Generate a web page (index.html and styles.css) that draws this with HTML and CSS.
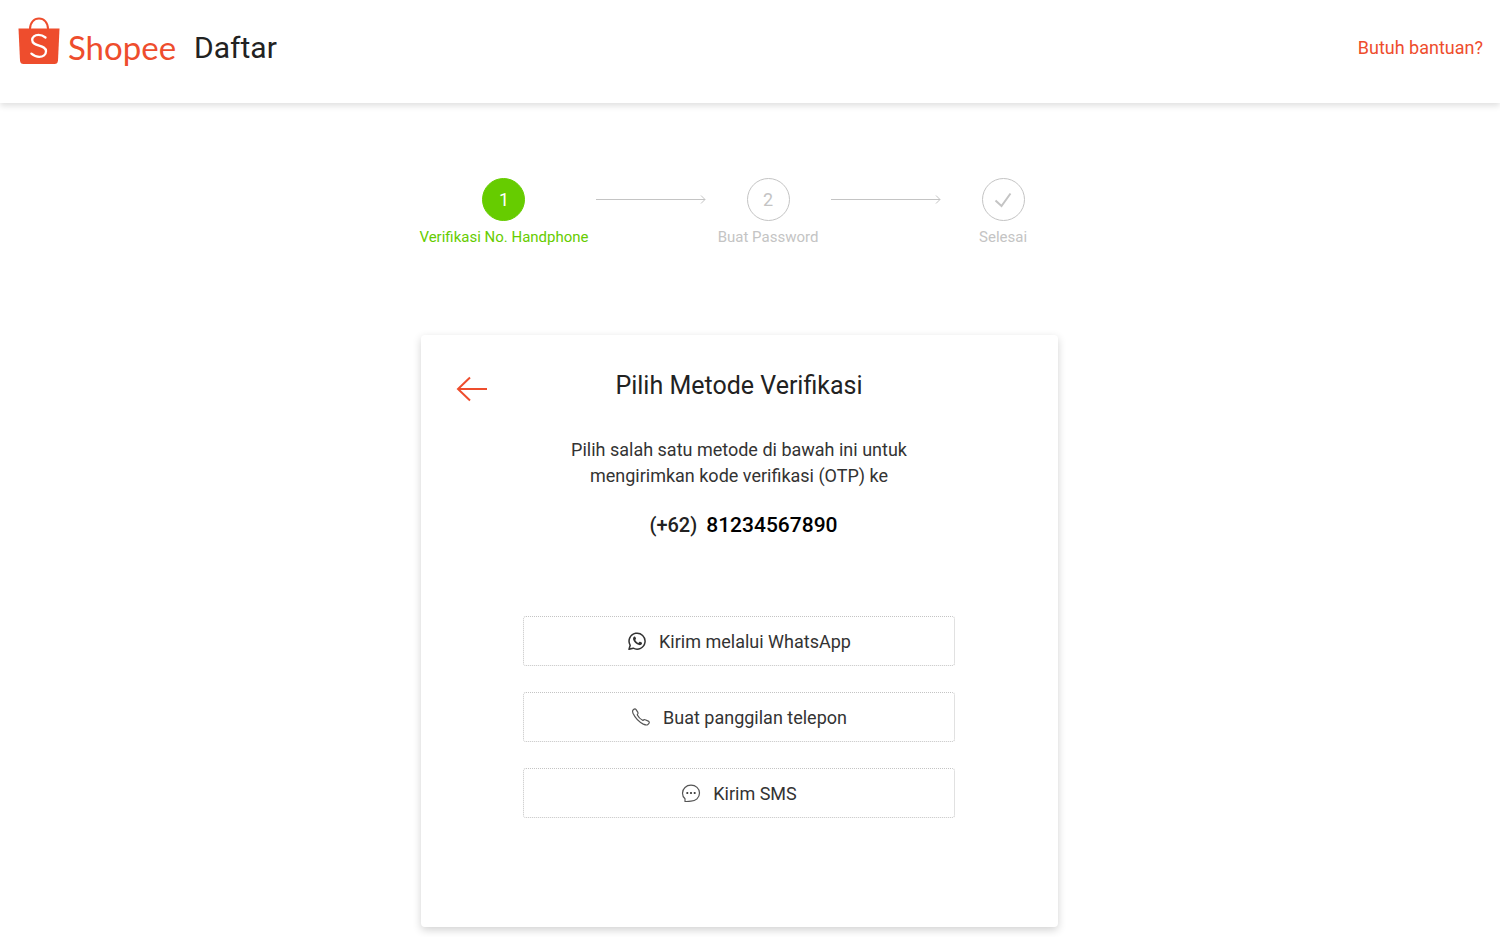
FILE: index.html
```html
<!doctype html>
<html lang="id">
<head>
  <meta charset="UTF-8" />
  <meta name="viewport" content="width=device-width, initial-scale=1" />
  <title>Daftar | Shopee</title>
  <link rel="stylesheet" href="styles.css">
</head>
<body>
  <header class="header">
    <a class="logo" href="#">
      <svg class="logo-bag" viewBox="0 0 42 48" width="42" height="48" aria-hidden="true">
        <path d="M12 12C12 5.500 16 1.500 21 1.500S30 5.500 30 12" fill="none" stroke="#ee4d2d" stroke-width="2" />
        <path d="M0.500 11.500h41l-1.500 32q-.3 3.500-3.500 3.500H5.500Q2.300 47 2 43.500z" fill="#ee4d2d" />
        <path d="M27.500 20.500C25 18.500 22.800 17.800 20.500 17.800c-3.800 0-6.300 2.200-6.300 5.200 0 7 13.800 4.300 13.800 11.200 0 3.500-3 5.600-6.800 5.600-3 0-5.500-1.200-7.800-3.200" fill="none" stroke="#fff" stroke-width="2.300" stroke-linecap="round" />
      </svg>
      <span class="logo-name">Shopee</span>
    </a>
    <h1 class="page-title">Daftar</h1>
    <a class="help" href="#">Butuh bantuan?</a>
  </header>

  <main class="main">
    <ol class="steps">
      <li class="step active">
        <span class="step-circle">1</span>
        <span class="step-label">Verifikasi No. Handphone</span>
      </li>
      <li class="step-arrow" aria-hidden="true">
        <svg viewBox="0 0 110 11" width="110" height="11"><path d="M0 5.500H109M105 1.500L109 5.500L105 9.500" /></svg>
      </li>
      <li class="step">
        <span class="step-circle">2</span>
        <span class="step-label">Buat Password</span>
      </li>
      <li class="step-arrow" aria-hidden="true">
        <svg viewBox="0 0 110 11" width="110" height="11"><path d="M0 5.500H109M105 1.500L109 5.500L105 9.500" /></svg>
      </li>
      <li class="step">
        <span class="step-circle">
          <svg viewBox="0 0 18 16" width="18" height="16"><path d="M1.500 8.500L7.500 14L16.500 1.500" fill="none" stroke="#c4c4c4" stroke-width="2" /></svg>
        </span>
        <span class="step-label">Selesai</span>
      </li>
    </ol>

    <section class="card">
      <div class="card-head">
        <button class="back" type="button" aria-label="Kembali">
          <svg viewBox="0 0 32 26" width="32" height="26"><path d="M31 13H2M14 1.500L2 13L14 24.500" fill="none" stroke="#ee4d2d" stroke-width="2" /></svg>
        </button>
        <h2 class="card-title">Pilih Metode Verifikasi</h2>
      </div>
      <p class="card-text">Pilih salah satu metode di bawah ini untuk<br>mengirimkan kode verifikasi (OTP) ke</p>
      <p class="phone"><span class="phone-code">(+62)</span><span class="phone-number">81234567890</span></p>

      <div class="methods">
        <button class="method" type="button">
          <svg viewBox="0 0 20 20" width="20" height="20" aria-hidden="true">
            <path d="M2 18.300L3.200 14.300A8 8 0 1 1 6.200 17.200Z" fill="none" stroke="#333" stroke-width="1.500" stroke-linejoin="round" />
            <path d="M7.300 5.600c.5-.2.900 0 1.100.5l.6 1.500c.1.300 0 .6-.7 1.300.7 1.500 1.700 2.400 3.100 3.100l.9-1c.2-.3.500-.3.800-.2l1.600.8c.4.200.4.500.3.900-.3 1.200-1.600 1.900-2.900 1.600-3-.7-5-2.700-5.900-5.300-.4-1.300.1-2.700 1.100-3.200z" fill="#333" />
          </svg>
          <span>Kirim melalui WhatsApp</span>
        </button>
        <button class="method" type="button">
          <svg viewBox="0 0 20 20" width="20" height="20" aria-hidden="true">
            <path d="M1.700 3.600c.6-1.300 2.300-2.200 3.200-1.300l2 3.100c.5.900.2 1.400-.7 2.400 1 2.200 3.100 4.400 5.700 5.700.9-.9 1.500-1.200 2.300-.7l3.600 1.600c1.200.8.100 2.500-1.200 3.300-1.100.7-2.700.1-4.300-.6C7.600 14.700 4 10.600 2 6.300c-.4-1-.7-1.800-.3-2.700z" fill="none" stroke="#555" stroke-width="1.200" stroke-linejoin="round" />
          </svg>
          <span>Buat panggilan telepon</span>
        </button>
        <button class="method" type="button">
          <svg viewBox="0 0 20 20" width="20" height="20" aria-hidden="true">
            <path d="M4 18.500V15.800C2.400 14.400 1.500 12.400 1.500 10.200 1.500 5.500 5.300 2.200 10 2.200s8.500 3.300 8.500 7.900-3.800 8.100-8.500 8.100c-1 0-4.200.3-6 .3z" fill="none" stroke="#555" stroke-width="1.200" stroke-linejoin="round" />
            <circle cx="6.300" cy="10" r="1.100" fill="#333" />
            <circle cx="10" cy="10" r="1.100" fill="#333" />
            <circle cx="13.700" cy="10" r="1.100" fill="#333" />
          </svg>
          <span>Kirim SMS</span>
        </button>
      </div>
    </section>
  </main>
</body>
</html>
```
FILE: styles.css
```css
* {
  box-sizing: border-box;
}
body {
  margin: 0;
  background: #fff;
  color: #222;
  font-family: Roboto, "Liberation Sans", sans-serif;
  font-size: 18px;
}
h1, h2, p, ol {
  margin: 0;
  padding: 0;
  font-weight: 400;
}
a {
  text-decoration: none;
}
button {
  font-family: inherit;
  background: #fff;
  cursor: pointer;
}
svg {
  display: block;
}
.header {
  display: flex;
  align-items: center;
  height: 103px;
  padding: 0 17px 8px 18px;
  box-shadow: 0 3px 6px rgba(0, 0, 0, 0.12);
}
.logo {
  display: flex;
  align-items: center;
  gap: 8px;
  height: 62px;
  padding-bottom: 14px;
  color: #ee4d2d;
}
.logo-name {
  font-family: Lato, sans-serif;
  font-size: 33px;
  line-height: 40px;
  padding-top: 12px;
}
.page-title {
  margin-left: 18px;
  font-size: 30px;
}
.help {
  margin-left: auto;
  color: #ee4d2d;
  font-size: 18px;
}
.main {
  padding: 75px 22px 10px 0;
}
.steps {
  display: flex;
  justify-content: center;
  list-style: none;
}
.step {
  display: flex;
  flex-direction: column;
  align-items: center;
  gap: 6px;
  min-width: 125px;
  padding: 0 7px;
  color: #c4c4c4;
}
.step-circle {
  display: flex;
  align-items: center;
  justify-content: center;
  width: 43px;
  height: 43px;
  border: 1px solid #c4c4c4;
  border-radius: 50%;
}
.step-label {
  font-size: 15px;
  line-height: 20px;
}
.step.active {
  color: #6c0;
}
.step.active .step-circle {
  background: #6c0;
  border-color: #6c0;
  color: #fff;
}
.step-arrow {
  padding-top: 16px;
}
.step-arrow path {
  fill: none;
  stroke: #c4c4c4;
}
.card {
  width: 637px;
  max-width: 100%;
  margin: 88px auto 0;
  padding: 34px 35px 109px;
  border-radius: 4px;
  box-shadow: 0 3px 8px rgba(0, 0, 0, 0.18);
  text-align: center;
}
.card-head {
  display: grid;
  grid-template-columns: 32px 1fr 32px;
  align-items: center;
}
.back {
  padding: 6px 0 0;
  border: 0;
}
.card-title {
  font-size: 25px;
  line-height: 34px;
}
.card-text {
  margin-top: 34px;
  color: #333;
  line-height: 26px;
}
.phone {
  display: flex;
  justify-content: center;
  align-items: baseline;
  gap: 9px;
  margin-top: 22px;
  padding-left: 9px;
  font-size: 20px;
  font-weight: 500;
  line-height: 28px;
}
.phone-number {
  color: #000;
  font-size: 21px;
}
.methods {
  display: flex;
  flex-direction: column;
  gap: 26px;
  max-width: 432px;
  margin: 77px auto 0;
}
.method {
  display: flex;
  align-items: center;
  justify-content: center;
  gap: 12px;
  height: 50px;
  border: 1px dotted #c4c4c4;
  border-radius: 3px;
  color: #333;
  font-size: 18px;
}
```
